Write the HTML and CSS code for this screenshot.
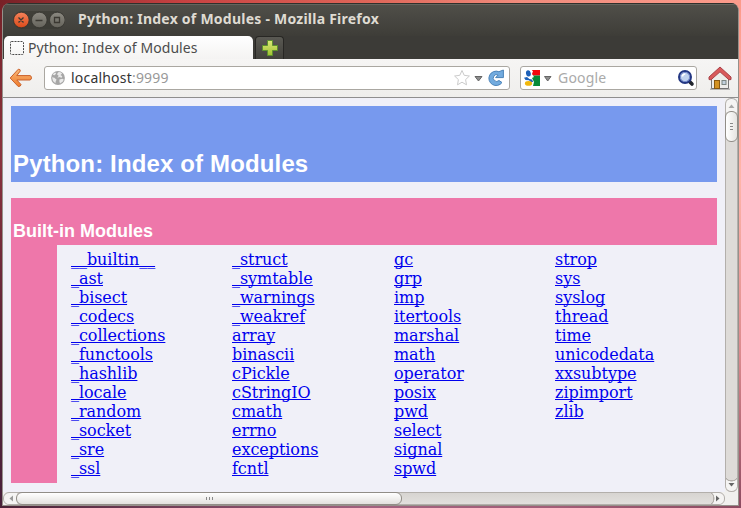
FILE: index.html
```html
<!DOCTYPE html>
<html lang="en">
<head>
<meta charset="utf-8">
<title>Python: Index of Modules</title>
<link rel="stylesheet" href="styles.css">
</head>
<body>
<div class="window">
  <header class="titlebar">
    <div class="controls">
      <svg width="52" height="18" viewBox="0 0 52 18">
        <defs>
          <linearGradient id="close" x2="0" y2="1"><stop stop-color="#f4835b"/><stop offset="1" stop-color="#dc4a19"/></linearGradient>
          <linearGradient id="ctl" x2="0" y2="1"><stop stop-color="#8b8981"/><stop offset="1" stop-color="#65635b"/></linearGradient>
        </defs>
        <rect width="52" height="18" rx="9" fill="#393832" opacity=".6"/>
        <g stroke="#35332e" stroke-width=".8"><circle cx="8.3" cy="9" r="7.8" fill="url(#close)"/><circle cx="26.3" cy="9" r="7.8" fill="url(#ctl)"/><circle cx="44.3" cy="9" r="7.8" fill="url(#ctl)"/></g>
        <path d="M5.5 6.5l5 5m0-5l-5 5M22.5 9.5h7M41.5 6.5h5v5h-5z" fill="none" stroke="#3b3832" stroke-width="1.3"/>
      </svg>
    </div>
    <span class="window-title">Python: Index of Modules - Mozilla Firefox</span>
  </header>
  <nav class="tabs">
    <div class="tab">
      <svg width="14" height="14" viewBox="0 0 14 14"><rect x=".5" y=".5" width="13" height="13" rx="1" fill="none" stroke="#4b4b4b" stroke-dasharray="2 1"/></svg>
      <span>Python: Index of Modules</span>
    </div>
    <div class="new-tab">
      <svg width="16" height="16" viewBox="0 0 16 16"><defs><linearGradient id="plus" x2="0" y2="1"><stop stop-color="#dcea79"/><stop offset="1" stop-color="#9fc12f"/></linearGradient></defs><path d="M5.5.5h5v5h5v5h-5v5h-5v-5h-5v-5h5z" fill="url(#plus)" stroke="#5d912e"/></svg>
    </div>
  </nav>
  <div class="toolbar">
    <svg class="back" width="24" height="20" viewBox="0 0 24 20"><defs><linearGradient id="arrow" x2="0" y2="1"><stop stop-color="#f9b879"/><stop offset="1" stop-color="#ef7c2b"/></linearGradient></defs><path d="M9.3 1.2Q11.5 1 11.3 3L7.8 7.6H21Q22.5 8 22.5 9.8Q22.5 11.5 21 12H7.8L12 16.5Q12 18.5 9.2 18.5L1.2 10z" fill="url(#arrow)" stroke="#c9602b" stroke-linejoin="round"/></svg>
    <div class="field address">
      <svg width="14" height="14" viewBox="0 0 14 14"><circle cx="7" cy="7" r="6.9" fill="#a6a6a6"/><path d="M2 3L4 1.4l1.2.8L3.8 4.2 2.2 4zM7.2 1.2L9 1l2.2 1.4L9.5 4l1.8 1.2-.6 1.6L8 6 6.4 7.2 7.6 4.8 6 3.2zM1 6.2l2.4.6 2.2 2L4.8 10l-.4 2.2L2 10zM8.4 8.6l2.8-.8 1.6.6-1 2.2L9 12.6l-.6-2z" fill="#e9e9e9"/></svg>
      <span class="url">localhost<span class="port">:9999</span></span>
      <svg class="url-icons" width="54" height="20" viewBox="0 0 54 20"><path d="M10 2.5l2.2 4.8 5.2.7-3.8 3.6.9 5.2-4.5-2.6-4.5 2.6.9-5.2L2.6 8l5.2-.7z" fill="#fff" stroke="#cbcbcb"/><path d="M23 8.5h7L26.5 13z" fill="#8d8d8d" stroke="#666"/><path d="M46.9 3.7L51.4 2v7.6h-7.8l2.6-2.6A3.4 3.4 0 1 0 47 12.5l3 2A7.2 7.2 0 1 1 46.9 3.7z" fill="#72abdf" stroke="#4b83b8"/></svg>
    </div>
    <div class="field search">
      <svg width="28" height="16" viewBox="0 0 28 16"><path d="M8 0h8v5.5H7.5z" fill="#f5070b"/><path d="M8 5.500h8V16H8z" fill="#078b38"/><path d="M0 0h7l2 1-1 3 2 3-2 1 2 4-1 4H0z" fill="#fff"/><ellipse cx="4.4" cy="3.4" rx="2.4" ry="3.2" fill="#1e61b8" transform="rotate(-12 4.4 3.4)"/><path d="M0 7.8L3 7l2.400 2L8 9.500l1.200 2.300-2 .7L5 10.300 1.500 9.900z" fill="#1e61b8"/><ellipse cx="4.500" cy="13.400" rx="3.600" ry="2.400" fill="#f1b70b"/><path d="M20.500 6.500h6.500L23.700 11z" fill="#8d8d8d" stroke="#666"/></svg>
      <span class="placeholder">Google</span>
      <svg class="glass" width="18" height="18" viewBox="0 0 18 18"><path d="M12 12l3 3" stroke="#20242c" stroke-width="3.6" stroke-linecap="round"/><circle cx="8" cy="8" r="6" fill="#c0d2ee" stroke="#233783" stroke-width="2"/><circle cx="8" cy="8" r="4.600" fill="none" stroke="#6c83c8" stroke-width=".9"/><path d="M5.300 7.500a3 3 0 0 1 3-2.500" fill="none" stroke="#fff" stroke-width="1.700"/></svg>
    </div>
    <svg class="home" width="24" height="24" viewBox="0 0 24 24"><path d="M3.500 12L12 4l8.500 8v10.500h-17z" fill="#ededeb" stroke="#777"/><path d="M2 23.200h20" stroke="#666" opacity=".6"/><rect x="6.500" y="14.500" width="5" height="8" fill="#d39324" stroke="#885912"/><rect x="14" y="14.500" width="4" height="4" fill="#c1d0dd" stroke="#7b8582"/><path d="M1 11L12 1l11 10v2.500l-2 .3-9-8-9 8-2-.3z" fill="#d9595b" stroke="#a94248"/></svg>
  </div>
  <div class="viewport">
    <main class="page">
      <section class="banner"><h1>Python: Index of Modules</h1></section>
      <section class="modules">
        <h2>Built-in Modules</h2>
        <div class="module-body">
          <ul><li><a href="#">__builtin__</a></li><li><a href="#">_ast</a></li><li><a href="#">_bisect</a></li><li><a href="#">_codecs</a></li><li><a href="#">_collections</a></li><li><a href="#">_functools</a></li><li><a href="#">_hashlib</a></li><li><a href="#">_locale</a></li><li><a href="#">_random</a></li><li><a href="#">_socket</a></li><li><a href="#">_sre</a></li><li><a href="#">_ssl</a></li></ul>
          <ul><li><a href="#">_struct</a></li><li><a href="#">_symtable</a></li><li><a href="#">_warnings</a></li><li><a href="#">_weakref</a></li><li><a href="#">array</a></li><li><a href="#">binascii</a></li><li><a href="#">cPickle</a></li><li><a href="#">cStringIO</a></li><li><a href="#">cmath</a></li><li><a href="#">errno</a></li><li><a href="#">exceptions</a></li><li><a href="#">fcntl</a></li></ul>
          <ul><li><a href="#">gc</a></li><li><a href="#">grp</a></li><li><a href="#">imp</a></li><li><a href="#">itertools</a></li><li><a href="#">marshal</a></li><li><a href="#">math</a></li><li><a href="#">operator</a></li><li><a href="#">posix</a></li><li><a href="#">pwd</a></li><li><a href="#">select</a></li><li><a href="#">signal</a></li><li><a href="#">spwd</a></li></ul>
          <ul><li><a href="#">strop</a></li><li><a href="#">sys</a></li><li><a href="#">syslog</a></li><li><a href="#">thread</a></li><li><a href="#">time</a></li><li><a href="#">unicodedata</a></li><li><a href="#">xxsubtype</a></li><li><a href="#">zipimport</a></li><li><a href="#">zlib</a></li></ul>
        </div>
      </section>
    </main>
    <div class="vscroll">
      <div class="cap cap-up"><svg width="7" height="4"><path d="M.5 4L3.5.5l3 3.500z" fill="#aaa"/></svg></div>
      <div class="vthumb"><i></i><i></i><i></i></div>
      <div class="cap cap-down"><svg width="7" height="4"><path d="M.5 0L3.500 3.500l3-3.500z" fill="#666"/></svg></div>
    </div>
    <div class="hscroll">
      <div class="cap cap-left"><svg width="4" height="7"><path d="M4 .5L.5 3.500l3.500 3z" fill="#999"/></svg></div>
      <div class="hthumb"><i></i><i></i><i></i></div>
      <div class="cap cap-right"><svg width="4" height="7"><path d="M0 .5l3.500 3L0 6.500z" fill="#666"/></svg></div>
    </div>
    <div class="corner"></div>
  </div>
</div>
</body>
</html>
```
FILE: styles.css
```css
* { box-sizing: border-box; }
body {
  margin: 0;
  height: 508px;
  padding: 3px 2px 2px;
  overflow: hidden;
  background:
    linear-gradient(90deg, #782127, #c84242 25%, #df6659 50%, #f08b7c 70%, #fc9b8b) top / 100% 12px no-repeat,
    linear-gradient(90deg, #4b2237, #a3627f 50%, #a35e78 75%, #8d4b61) bottom / 100% 3px no-repeat,
    linear-gradient(#752127, #8b323e 30%, #582236 70%, #48203a) left / 3px 100% no-repeat,
    linear-gradient(#fc9b8b, #ffb5a9 35%, #db8a8e 70%, #8d4b61) right / 3px 100% no-repeat;
}
svg { display: block; flex: none; }
.window {
  width: 737px;
  height: 503px;
  display: flex;
  flex-direction: column;
  overflow: hidden;
  border: 1px solid #96918b;
  border-top: 0;
  border-radius: 8px 8px 0 0;
  background: #3c3b37;
}
.titlebar {
  height: 33px;
  flex: none;
  display: flex;
  align-items: center;
  padding-left: 10px;
  border-top: 1px solid #30302c;
  box-shadow: inset 0 1px #65645d;
  background: linear-gradient(#504f49, #3e3d38);
}
.window-title {
  margin-left: 13px;
  color: #dfdbd2;
  font: bold 14px/20px "Noto Sans", sans-serif;
  letter-spacing: .24px;
  white-space: nowrap;
  padding-bottom: 2px;
}
.tabs { display: flex; height: 23px; flex: none; }
.tab {
  width: 249px;
  margin-left: 1px;
  padding-left: 6px;
  display: flex;
  align-items: center;
  gap: 4px;
  border-radius: 5px 5px 0 0;
  background: linear-gradient(#fff, #f4f3f2);
  color: #4c4c4c;
  font: 14px/22px "Noto Sans", sans-serif;
  letter-spacing: .06px;
  white-space: nowrap;
}
.new-tab {
  width: 29px;
  margin-left: 2px;
  display: grid;
  place-items: center;
  border: 1px solid #282724;
  border-bottom: 0;
  border-radius: 4px 4px 0 0;
  background: linear-gradient(#5a5953, #42413c);
}
.toolbar {
  height: 39px;
  flex: none;
  display: flex;
  align-items: center;
  padding-left: 6px;
  border-bottom: 1px solid #8f8e8e;
  background: linear-gradient(#f6f5f4, #efeeec);
}
.field {
  height: 24px;
  display: flex;
  align-items: center;
  background: #fff;
  border: 1px solid #aaa7a1;
  border-radius: 3px;
  font: 14px/20px "Noto Sans", sans-serif;
  letter-spacing: .2px;
}
.address { width: 466px; margin-left: 11px; padding-left: 6px; color: #333; }
.url { margin-left: 6px; }
.port { color: #999; }
.url-icons { margin: 0 3px 0 auto; }
.search { width: 177px; margin-left: 10px; padding-left: 3px; }
.placeholder { margin-left: 6px; color: #aaa; }
.glass { margin: 0 1px 0 auto; }
.home { margin-left: 11px; }
.viewport {
  display: grid;
  grid-template: 394px 13px / 722px 13px;
  background: #f1f0ee;
}
.page { padding: 8px; background: #f0f0f8; overflow: hidden; }
.banner {
  height: 76px;
  display: flex;
  align-items: flex-end;
  padding: 0 2px 4px;
  background: #7799ee;
}
h1, h2 { margin: 0; color: #fff; font-family: "Liberation Sans", sans-serif; }
h1 { font-size: 24px; line-height: 28px; letter-spacing: .14px; }
.modules { height: 285px; margin-top: 16px; background: #ee77aa; }
h2 { height: 47px; padding: 23px 2px 0; font-size: 18px; line-height: 20px; }
.module-body {
  height: 238px;
  margin-left: 46px;
  padding: 5px 0 0 14px;
  display: grid;
  grid-template-columns: 161px 162px 161px 1fr;
  background: #f0f0f8;
}
ul { margin: 0; padding: 0; list-style: none; font: 16px/19px "DejaVu Serif", serif; letter-spacing: -.05px; }
li { height: 19px; }
a { color: #0000ee; text-decoration: underline; text-decoration-skip-ink: none; }
.vscroll, .hscroll { display: flex; background: #dedbd8; }
.vscroll { flex-direction: column; border: 1px solid #b3afab; border-width: 0 1px; border-radius: 6px; }
.hscroll { border: 1px solid #b3afab; border-radius: 6px; background: linear-gradient(#d7d4d1, #e2e0dd); }
.cap { display: grid; place-items: center; background: #f5f4f3; }
.cap-up { height: 14px; border-top: 1px solid #aaa; border-radius: 6px 6px 0 0; }
.cap-down { height: 14px; margin-top: auto; border-bottom: 1px solid #b3afab; border-radius: 0 0 6px 6px; }
.cap-left { width: 13px; border-radius: 6px 0 0 6px; }
.cap-right { width: 13px; margin-left: auto; border-radius: 0 6px 6px 0; }
/* Concave edges where the trough meets the end buttons */
.cap-down { background: radial-gradient(ellipse 6px 5px at 50% -2px, #dedbd8 85%, #b3afab 90% 105%, #f5f4f3 115%); }
.cap-right { background: radial-gradient(ellipse 5px 6px at -2px 50%, #dedbd8 85%, #b3afab 90% 105%, #f5f4f3 115%); }
.vthumb, .hthumb {
  display: flex;
  align-items: center;
  justify-content: center;
  gap: 2px;
  border: 1px solid #918d87;
  border-radius: 6px;
}
.vthumb { height: 31px; margin: -1px -1px 0; flex-direction: column; background: linear-gradient(90deg, #fff, #e5e4e1); }
.hthumb { width: 386px; margin: -1px 0 -1px -1px; background: linear-gradient(#fff, #e3e1de); }
.vthumb i { width: 3px; height: 1px; background: #888; }
.hthumb i { width: 1px; height: 3px; background: #888; }
```
